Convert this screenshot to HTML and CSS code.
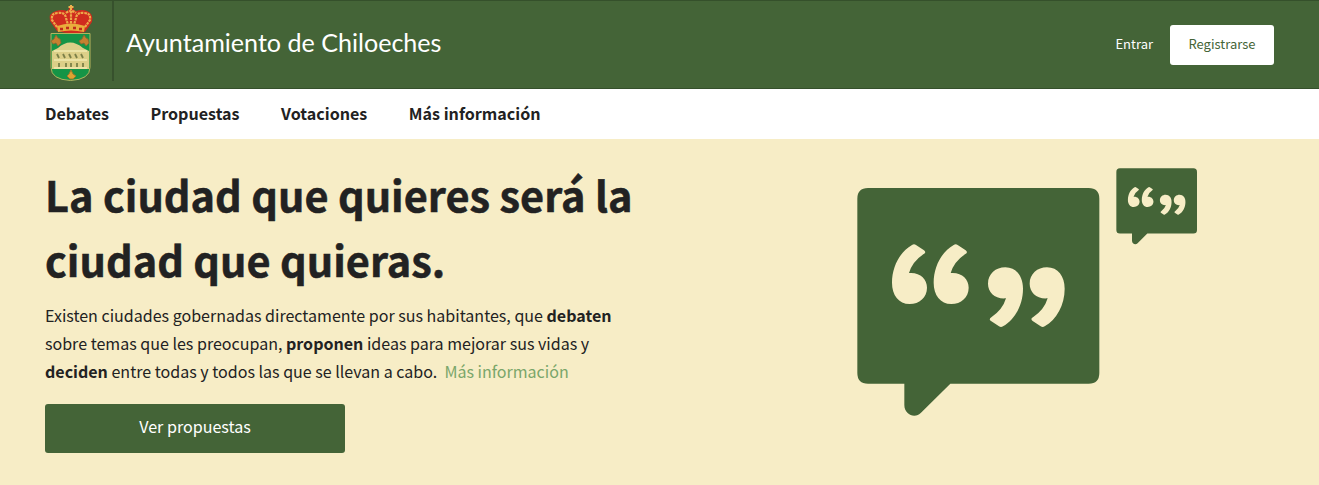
FILE: index.html
```html
<!DOCTYPE html>
<html lang="es">
<head>
<meta charset="utf-8">
<title>Ayuntamiento de Chiloeches</title>
<link rel="stylesheet" href="styles.css">
</head>
<body>
<header class="topbar">
  <a class="brand">
    <svg class="crest" width="46" height="78" viewBox="0 0 46 78">
      <path d="M9 27 2 17Q0 9 8 7Q14 5 19 7L21 5V2h4v3l3 2Q34 5 39 7Q46 10 44 18L37 28Q23 31 9 27Z" fill="#d02c1e"/>
      <path d="M9 23 4 16Q3 9 10 9Q17 8 18 14L20 21M37 23 42 16Q43 9 36 9Q29 8 28 14L26 21M23 7V20M18 9Q23 5 28 9" fill="none" stroke="#eda94a" stroke-width="2.200" stroke-dasharray="2.500 .8"/>
      <path d="M20.500 3h5M23 1v5" stroke="#efb04e" stroke-width="2"/>
      <path d="M9 22Q23 17 37 22L36 28Q23 25 10 28Z" fill="#e9ad3c"/>
      <path d="M12 25h3m3-1h3m4 0h3m3 1h3" stroke="#c02a1c" stroke-width="2.500"/>
      <path d="M3 29.500h39v34q0 12-19.500 13Q3 75.500 3 63.500Z" fill="#159446" stroke="#b5b45e"/>
      <path d="M4 65V47l6-3q12-11 25 0l6 3v18Z" fill="#dccf88"/>
      <path d="M6 47h33M6 56h33M6 64h33" stroke="#ece3a6" stroke-width="2"/>
      <path d="M9 50l2 4m4-4 2 4m4-4 2 4m4-4 2 4m4-4 2 4M11 59v4m7-4v4m5-4v4m6-4v4m6-4v4" stroke="#7c8048" stroke-width="1.800"/>
      <g fill="#c58130" stroke="#8f6830" stroke-width=".8">
        <path id="flower" d="m8 31-2 4-3 2 2 3 3-1 2 3 3-3-1-4-2-1Z"/>
        <use href="#flower" x="28"/>
      </g>
      <path d="m23 66-2 4-2 2 3 3h3l3-3-3-2Z" fill="#dda331" stroke="#9d7928"/>
    </svg>
    <span class="brand-name">Ayuntamiento de Chiloeches</span>
  </a>
  <div class="account">
    <a class="login">Entrar</a>
    <a class="register">Registrarse</a>
  </div>
</header>
<nav class="menu">
  <a>Debates</a><a>Propuestas</a><a>Votaciones</a><a>Más información</a>
</nav>
<main class="hero">
  <section class="intro">
    <h1 class="headline">La ciudad que quieres será la<br>ciudad que quieras.</h1>
    <p class="lead">Existen ciudades gobernadas directamente por sus habitantes, que <b>debaten</b><br>sobre temas que les preocupan, <b>proponen</b> ideas para mejorar sus vidas y<br><b>deciden</b> entre todas y todos las que se llevan a cabo. &nbsp;<a class="more">Más información</a></p>
    <a class="cta">Ver propuestas</a>
  </section>
  <svg class="bubbles" width="380" height="290" viewBox="0 0 1140 870">
    <defs>
      <path id="quote" d="M228 285 252 301Q260 307 251 312Q217 335 207 369C240 366 261 387 261 413C261 442 238 462 209 462C176 462 156 435 156 398C156 350 180 305 216 285Q222 281 228 285Z"/>
      <g id="bubble">
        <path d="M84 114H746Q778 114 778 146V669Q778 701 746 701H331L243 788C226 807 193 795 193 765V701H84Q52 701 52 669V146Q52 114 84 114Z" fill="#446437"/>
        <g fill="#f7edc6">
          <use href="#quote"/><use href="#quote" x="125"/>
          <use href="#quote" transform="rotate(180 352.500 407)"/>
          <use href="#quote" transform="rotate(180 415 407)"/>
        </g>
      </g>
    </defs>
    <use href="#bubble"/>
    <use href="#bubble" transform="translate(811.700 17) scale(.3333)"/>
  </svg>
</main>
</body>
</html>
```
FILE: styles.css
```css
* { box-sizing: border-box; }
body {
  margin: 0;
  height: 485px;
  overflow: hidden;
  display: flex;
  flex-direction: column;
  background: #f7edc6;
  color: #222;
  font-family: "Noto Sans CJK SC", "Noto Sans", sans-serif;
}
.topbar {
  height: 89px;
  flex: none;
  display: flex;
  justify-content: space-between;
  padding: 0 45px;
  background: #446437;
  border-top: 1px solid #35502b;
  border-bottom: 1px solid #35502b;
  color: #fff;
}
.brand { display: flex; height: 80px; }
.crest { margin: 3px 0 0 3px; }
.brand-name {
  margin-left: 18px;
  padding-left: 12px;
  border-left: 2px solid #37512d;
  font: 25.1px/82px Lato, sans-serif;
}
.account {
  display: flex;
  align-items: center;
  gap: 17px;
  font-size: 13px;
}
.login { margin-top: -2px; }
.register {
  width: 104px;
  height: 40px;
  border-radius: 3px;
  background: #fff;
  color: #446437;
  text-align: center;
  line-height: 38px;
}
.menu {
  flex: none;
  height: 50px;
  display: flex;
  gap: 41.5px;
  padding-left: 45px;
  background: #fff;
  font-size: 16.1px;
  font-weight: 700;
  line-height: 48px;
}
.hero {
  flex: 1;
  display: flex;
  justify-content: space-between;
  padding: 11px 99px 0 45px;
}
.intro { white-space: nowrap; padding-top: 12px; }
.headline {
  margin: 0;
  font-size: 41.5px;
  line-height: 64.5px;
  -webkit-text-stroke: .5px #222;
}
.lead {
  margin: 10px 0 19px;
  font-size: 16.04px;
  line-height: 28px;
}
.more { color: #7aa66a; }
.cta {
  display: block;
  width: 300px;
  height: 49px;
  border-radius: 3px;
  background: #446437;
  color: #fff;
  text-align: center;
  font-size: 16.1px;
  line-height: 45px;
}
```
